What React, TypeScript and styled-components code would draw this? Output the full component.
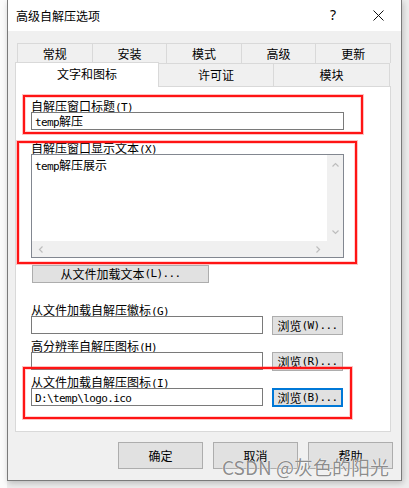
import React from "react";
import styled, { createGlobalStyle } from "styled-components";

const Global = createGlobalStyle`
  html, body { margin: 0; padding: 0; }
  body {
    width: 409px;
    height: 488px;
    overflow: hidden;
    background: #f7f7f7;
    font-family: "Noto Sans CJK SC", "Microsoft YaHei", sans-serif;
    color: #000;
  }
`;

const Page = styled.div`
  width: 409px;
  height: 488px;
  box-sizing: border-box;
  padding-left: 7px;
  display: flex;
  align-items: flex-start;
  background: linear-gradient(to right, #fbfbfb 0 7px, #ededed 7px);
`;

const Dialog = styled.div`
  position: relative;
  width: 395px;
  height: 481px;
  box-sizing: border-box;
  border: 1px solid #7a7a7a;
  border-top: none;
  background: #f0f0f0;
  display: flex;
  flex-direction: column;
  box-shadow: 1px 2px 6px rgba(0, 0, 0, 0.22);
`;

const TitleBar = styled.div`
  height: 31px;
  flex: none;
  background: #fff;
  display: flex;
  align-items: center;
  padding-left: 8px;
  padding-right: 17px;
`;

const TitleText = styled.div`
  flex: 1;
  font-size: 12px;
  line-height: 16px;
`;

const HelpMark = styled.span`
  font-family: "Noto Sans", sans-serif;
  font-size: 14px;
  line-height: 14px;
  margin-right: 37px;
  margin-top: -1px;
`;

const CloseIcon = () => (
  <svg width="11" height="11" viewBox="0 0 11 11">
    <path d="M0.5 0.5 L10.5 10.5 M10.5 0.5 L0.5 10.5" stroke="#111" strokeWidth="1" />
  </svg>
);

const Body = styled.div`
  padding: 12px 0 0 7px;
  display: flex;
  flex-direction: column;
`;

const TabRowBack = styled.div`
  display: flex;
  height: 20px;
  width: 374px;
  margin-left: 2px;
`;

const TabRowFront = styled.div`
  display: flex;
  height: 23px;
  width: 375px;
`;

const Tab = styled.div<{ $w?: number; $active?: boolean }>`
  box-sizing: border-box;
  ${(p) => (p.$w ? `width: ${p.$w}px; flex: none;` : `flex: 1;`)}
  height: ${(p) => (p.$active ? 25 : 100)}${(p) => (p.$active ? "px" : "%")};
  margin-top: ${(p) => (p.$active ? -1 : 0)}px;
  margin-left: -1px;
  &:first-child { margin-left: 0; }
  border: 1px solid #d9d9d9;
  border-bottom: ${(p) => (p.$active ? "none" : "0")};
  background: ${(p) => (p.$active ? "#fff" : "#f0f0f0")};
  position: relative;
  z-index: ${(p) => (p.$active ? 2 : 0)};
  display: flex;
  align-items: center;
  justify-content: center;
  font-size: 12px;
  line-height: 16px;
  padding-bottom: ${(p) => (p.$active ? 3 : 0)}px;
`;

const Panel = styled.div`
  position: relative;
  box-sizing: border-box;
  width: 376px;
  height: 346px;
  background: #fff;
  border: 1px solid #d9d9d9;
  padding: 12px 0 0 15px;
  display: flex;
  flex-direction: column;
  align-items: flex-start;
`;

const Label = styled.div<{ $mt?: number }>`
  font-size: 12px;
  line-height: 13px;
  height: 13px;
  margin-top: ${(p) => p.$mt ?? 0}px;
  white-space: nowrap;
`;

const Ascii = styled.span`
  font-family: "DejaVu Sans Mono", "Liberation Mono", monospace;
  font-size: 11px;
  letter-spacing: -0.6px;
`;

const Mixed = ({ text }: { text: string }) => (
  <>
    {text
      .split(/([\x20-\x7e]+)/)
      .filter(Boolean)
      .map((part, i) =>
        /^[\x20-\x7e]+$/.test(part) ? (
          <Ascii key={i}>{part}</Ascii>
        ) : (
          <React.Fragment key={i}>{part}</React.Fragment>
        )
      )}
  </>
);

const TextBox = styled.div<{ $w: number }>`
  box-sizing: border-box;
  width: ${(p) => p.$w}px;
  height: 18px;
  border: 1px solid #7a7a7a;
  background: #fff;
  padding-left: 3px;
  font-size: 12px;
  line-height: 16px;
  white-space: nowrap;
`;

const Memo = styled.div`
  box-sizing: border-box;
  width: 313px;
  height: 104px;
  border: 1px solid #828790;
  background: #fff;
  display: grid;
  grid-template-columns: 1fr 16px;
  grid-template-rows: 1fr 16px;
`;

const MemoText = styled.div`
  padding: 2px 3px;
  font-size: 12px;
  line-height: 16px;
`;

const VScroll = styled.div`
  background: #f0f0f0;
  display: flex;
  flex-direction: column;
  justify-content: space-between;
  align-items: center;
  padding: 7px 0 6px;
`;

const HScroll = styled.div`
  background: #f0f0f0;
  display: flex;
  justify-content: space-between;
  align-items: center;
  padding: 0 6px 0 6px;
`;

const Corner = styled.div`
  background: #f0f0f0;
`;

const Chevron = ({ dir }: { dir: "up" | "down" | "left" | "right" }) => {
  const paths: Record<string, string> = {
    up: "M0.5 4.5 L3.5 1.5 L6.5 4.5",
    down: "M0.5 1.5 L3.5 4.5 L6.5 1.5",
    left: "M4.5 0.5 L1.5 3.5 L4.5 6.5",
    right: "M1.5 0.5 L4.5 3.5 L1.5 6.5",
  };
  const horiz = dir === "left" || dir === "right";
  return (
    <svg width={horiz ? 6 : 7} height={horiz ? 7 : 6} viewBox={horiz ? "0 0 6 7" : "0 0 7 6"}>
      <path d={paths[dir]} fill="none" stroke="#bdbdbd" strokeWidth="1.2" />
    </svg>
  );
};

const WinButton = styled.div<{ $w: number; $h?: number; $focus?: boolean; $mt?: number; $ml?: number }>`
  box-sizing: border-box;
  flex: none;
  width: ${(p) => p.$w}px;
  height: ${(p) => p.$h ?? 18}px;
  margin-top: ${(p) => p.$mt ?? 0}px;
  margin-left: ${(p) => p.$ml ?? 0}px;
  background: #e1e1e1;
  border: ${(p) => (p.$focus ? "2px solid #0078d7" : "1px solid #adadad")};
  display: flex;
  align-items: center;
  justify-content: center;
  font-size: 12px;
  line-height: 14px;
  white-space: nowrap;
`;

const FieldRow = styled.div`
  display: flex;
  gap: 9px;
  align-items: flex-start;
`;

const Footer = styled.div`
  display: flex;
  justify-content: flex-end;
  gap: 10px;
  padding-right: 8px;
  margin-top: 10px;
`;

const DialogButton = styled.div`
  box-sizing: border-box;
  width: 85px;
  height: 27px;
  background: #e1e1e1;
  border: 1px solid #adadad;
  display: flex;
  align-items: center;
  justify-content: center;
  font-size: 12px;
  line-height: 16px;
`;

const Highlight = styled.div<{ $l: number; $t: number; $w: number; $h: number }>`
  position: absolute;
  left: ${(p) => p.$l}px;
  top: ${(p) => p.$t}px;
  width: ${(p) => p.$w}px;
  height: ${(p) => p.$h}px;
  box-sizing: border-box;
  border: 2px solid #ff1414;
  box-shadow: 0 0 0 1px rgba(255, 80, 80, 0.35), inset 0 0 0 1px rgba(255, 80, 80, 0.25);
  pointer-events: none;
  z-index: 3;
`;

const Watermark = styled.div`
  position: absolute;
  left: 214px;
  top: 456px;
  font-family: "Noto Sans CJK SC", "Noto Sans", sans-serif;
  font-size: 19px;
  line-height: 22px;
  color: rgba(110, 110, 110, 0.8);
  text-shadow: 0 0 1px #fff, 0 0 1px #fff;
  white-space: nowrap;
  pointer-events: none;
`;

export default function App() {
  return (
    <>
      <Global />
      <Page>
        <Dialog>
          <TitleBar>
            <TitleText>高级自解压选项</TitleText>
            <HelpMark>?</HelpMark>
            <CloseIcon />
          </TitleBar>
          <Body>
            <TabRowBack>
              <Tab>常规</Tab>
              <Tab>安装</Tab>
              <Tab>模式</Tab>
              <Tab>高级</Tab>
              <Tab>更新</Tab>
            </TabRowBack>
            <TabRowFront>
              <Tab $w={144} $active>文字和图标</Tab>
              <Tab $w={116}>许可证</Tab>
              <Tab $w={117}>模块</Tab>
            </TabRowFront>
            <Panel>
              <Label><Mixed text="自解压窗口标题(T)" /></Label>
              <TextBox $w={313}><Mixed text="temp解压" /></TextBox>

              <Label $mt={11}><Mixed text="自解压窗口显示文本(X)" /></Label>
              <Memo>
                <MemoText><Mixed text="temp解压展示" /></MemoText>
                <VScroll>
                  <Chevron dir="up" />
                  <Chevron dir="down" />
                </VScroll>
                <HScroll>
                  <Chevron dir="left" />
                  <Chevron dir="right" />
                </HScroll>
                <Corner />
              </Memo>

              <WinButton $w={177} $mt={7} $ml={1}><Mixed text="从文件加载文本(L)..." /></WinButton>

              <Label $mt={20}><Mixed text="从文件加载自解压徽标(G)" /></Label>
              <FieldRow>
                <TextBox $w={232} />
                <WinButton $w={71} $h={19}><Mixed text="浏览(W)..." /></WinButton>
              </FieldRow>

              <Label $mt={4}><Mixed text="高分辨率自解压图标(H)" /></Label>
              <FieldRow>
                <TextBox $w={232} />
                <WinButton $w={71} $h={19}><Mixed text="浏览(R)..." /></WinButton>
              </FieldRow>

              <Label $mt={4}><Mixed text="从文件加载自解压图标(I)" /></Label>
              <FieldRow>
                <TextBox $w={232}><Mixed text="D:\temp\logo.ico" /></TextBox>
                <WinButton $w={71} $h={19} $focus><Mixed text="浏览(B)..." /></WinButton>
              </FieldRow>

              <Highlight $l={7} $t={8} $w={340} $h={39} />
              <Highlight $l={1} $t={54} $w={340} $h={123} />
              <Highlight $l={7} $t={280} $w={329} $h={52} />
            </Panel>
          </Body>
          <Footer>
            <DialogButton>确定</DialogButton>
            <DialogButton>取消</DialogButton>
            <DialogButton>帮助</DialogButton>
          </Footer>
          <Watermark>CSDN @灰色的阳光</Watermark>
        </Dialog>
      </Page>
    </>
  );
}
